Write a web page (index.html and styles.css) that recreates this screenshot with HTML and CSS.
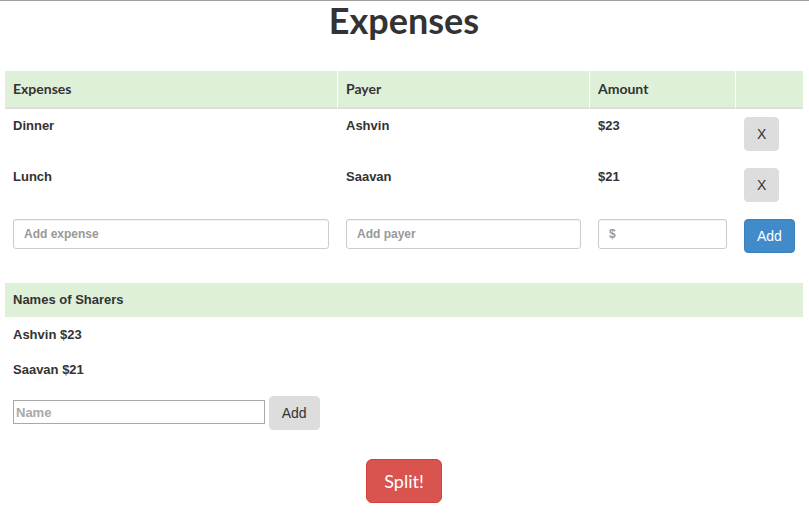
FILE: index.html
```html
<!DOCTYPE html>
<html>
<head>
<meta charset="utf-8">
<title>Expenses</title>
<link rel="stylesheet" href="styles.css">
</head>
<body>
<div class="page">
  <h1 class="title">Expenses</h1>

  <table class="grid expenses">
    <colgroup>
      <col class="c1"><col class="c2"><col class="c3"><col class="c4">
    </colgroup>
    <thead>
      <tr>
        <th>Expenses</th>
        <th>Payer</th>
        <th>Amount</th>
        <th></th>
      </tr>
    </thead>
    <tbody>
      <tr>
        <td>Dinner</td>
        <td>Ashvin</td>
        <td>$23</td>
        <td><button class="btn btn-default">X</button></td>
      </tr>
      <tr>
        <td>Lunch</td>
        <td>Saavan</td>
        <td>$21</td>
        <td><button class="btn btn-default">X</button></td>
      </tr>
      <tr>
        <td><input class="field" type="text" placeholder="Add expense"></td>
        <td><input class="field" type="text" placeholder="Add payer"></td>
        <td><input class="field" type="text" placeholder="$"></td>
        <td><button class="btn btn-primary">Add</button></td>
      </tr>
    </tbody>
  </table>

  <table class="grid sharers">
    <thead>
      <tr><th>Names of Sharers</th></tr>
    </thead>
    <tbody>
      <tr><td>Ashvin $23</td></tr>
      <tr><td>Saavan $21</td></tr>
      <tr><td class="name-cell"><input class="name" type="text" placeholder="Name"> <button class="btn btn-default">Add</button></td></tr>
    </tbody>
  </table>

  <div class="actions">
    <button class="btn-split">Split!</button>
  </div>
</div>
</body>
</html>
```

FILE: styles.css
```css
html, body {
  margin: 0;
  padding: 0;
  background: #fff;
}
body {
  border-top: 1px solid #a0a0a0;
  font-family: "Liberation Sans", Arial, Helvetica, sans-serif;
  font-size: 13px;
  color: #333;
}
.page {
  padding: 0 6px 0 5px;
}
.title {
  margin: 0;
  font-family: Lato, "Liberation Sans", sans-serif;
  font-size: 36px;
  font-weight: 700;
  line-height: 38px;
  text-align: center;
  color: #333;
}
.grid {
  width: 798px;
  border-collapse: separate;
  border-spacing: 0;
  table-layout: fixed;
}
.expenses {
  margin-top: 32px;
}
.c1 { width: 332px; }
.c2 { width: 252px; }
.c3 { width: 146px; }
.c4 { width: 68px; }
.grid th {
  background: #dff0d8;
  text-align: left;
  font-weight: 700;
  padding: 8px;
  vertical-align: top;
}
.expenses th {
  font-family: Lato, "Liberation Sans", sans-serif;
  font-size: 14px;
  line-height: 20px;
  border-bottom: 2px solid #ddd;
}
.expenses th + th {
  border-left: 1px solid #fff;
}
.sharers th {
  line-height: 18px;
}
.grid td {
  padding: 8px;
  border-top: 1px solid transparent;
  line-height: 18px;
  font-weight: 700;
  vertical-align: top;
}
.expenses td + td {
  border-left: 1px solid transparent;
}
.expenses tbody tr:first-child td {
  border-top: 0;
}
.sharers {
  margin-top: 22px;
}
.field {
  box-sizing: border-box;
  display: block;
  width: 100%;
  height: 30px;
  padding: 5px 10px;
  border: 1px solid #ccc;
  border-radius: 3px;
  font-family: "Liberation Sans", Arial, sans-serif;
  font-size: 12px;
  font-weight: 700;
  color: #555;
  box-shadow: inset 0 1px 1px rgba(0,0,0,0.06);
}
.field::placeholder {
  color: #999;
}
.name {
  box-sizing: border-box;
  width: 252px;
  height: 24px;
  margin-top: -2px;
  padding: 1px 2px;
  border: 1px solid #a9a9a9;
  font-family: "Liberation Sans", Arial, sans-serif;
  font-size: 13px;
  font-weight: 700;
  vertical-align: middle;
}
.name::placeholder {
  color: #a9a9a9;
}
.btn {
  box-sizing: border-box;
  display: inline-block;
  height: 34px;
  padding: 6px 12px;
  border: 1px solid transparent;
  border-radius: 4px;
  font-family: "Liberation Sans", Arial, sans-serif;
  font-size: 14px;
  font-weight: 400;
  line-height: 20px;
  vertical-align: middle;
  cursor: pointer;
}
.btn-default {
  background: #ddd;
  border-color: #ddd;
  color: #333;
}
.btn-primary {
  background: #428bca;
  border-color: #3b82c0;
  color: #fff;
}
.actions {
  display: flex;
  justify-content: center;
  margin-top: 21px;
}
.btn-split {
  box-sizing: border-box;
  height: 44px;
  padding: 10px 17px;
  border: 1px solid #d43f3a;
  border-radius: 6px;
  background: #d9534f;
  color: #fff;
  font-family: Lato, "Liberation Sans", sans-serif;
  font-size: 18px;
  line-height: 22px;
  cursor: pointer;
}
```
